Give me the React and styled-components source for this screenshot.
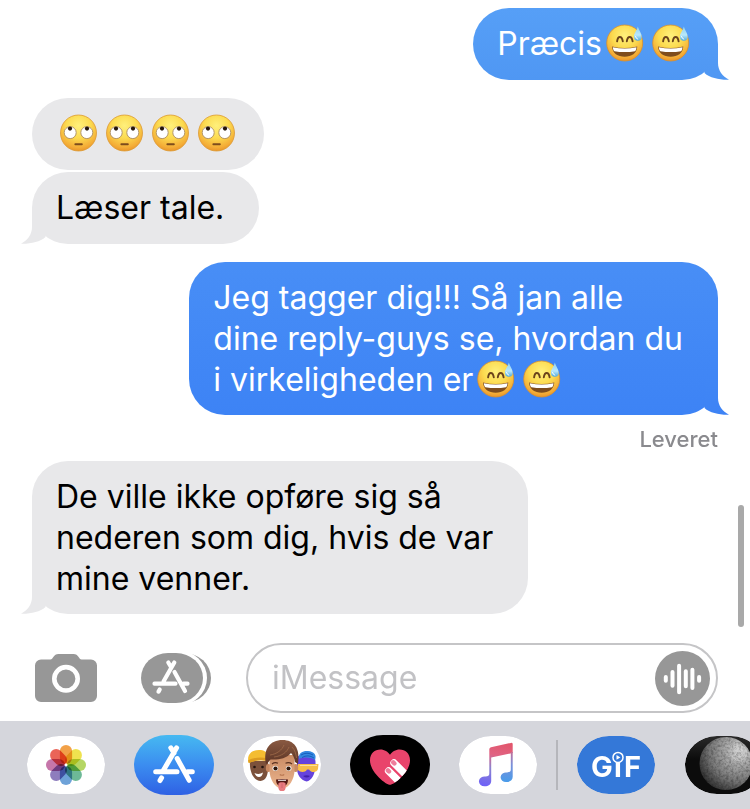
import React, { useState } from 'react';
import styled, { createGlobalStyle, css } from "styled-components"

const GlobalStyle = createGlobalStyle`
    * {
        box-sizing: border-box;
    }
    body {
        margin: 0;
        background-color: #fff;
        font-family: Inter, "Liberation Sans", sans-serif;
    }
    button {
        display: block;
        flex: none;
        padding: 0;
        border: 0;
        background: none;
        cursor: pointer;
    }
    svg {
        display: block;
    }
`

const Screen = styled.div`
    display: flex;
    flex-direction: column;
    min-height: 100vh;
    overflow-x: hidden;
`

const Thread = styled.main`
    position: relative;
    display: flex;
    flex-direction: column;
    flex: 1;
    gap: 18px;
    padding: 8px 32px 19px;
`

const ScrollThumb = styled.div`
    position: absolute;
    right: 6px;
    bottom: 6px;
    width: 6px;
    height: 122px;
    border-radius: 3px;
    background-color: #a9a9a9;
`

const Group = styled.div`
    display: flex;
    flex-direction: column;
    gap: 2px;
    align-items: ${({ $mine }) => ($mine ? 'flex-end' : 'flex-start')};
`

const BubbleWrapper = styled.div`
    position: relative;
    min-height: 72px;
    padding: 15px 24px;
    border-radius: 36px;
    font-size: 32px;
    line-height: 41px;
    white-space: pre-line;
    color: #000;
    background-color: #e8e8ea;
    ${({ $mine }) => $mine && css`
        color: #fff;
        background: linear-gradient(${({ $from }) => $from}, ${({ $to }) => $to});
    `}
    ${({ $wide }) => $wide && css`
        padding-right: 35px;
    `}
`

const TailSvg = styled.svg`
    position: absolute;
    bottom: 0;
    fill: ${({ $fill }) => $fill};
    ${({ $mine }) => ($mine ? css`right: -11px;` : css`
        left: -11px;
        transform: scaleX(-1);
    `)}
`

const EmojiSvg = styled.svg`
    display: inline-block;
    vertical-align: -7px;
`

const Status = styled.div`
    height: 28px;
    margin: -8px 0 -10px;
    font-size: 22px;
    font-weight: 500;
    line-height: 28px;
    text-align: right;
    color: #8a8a8e;
`

const Toolbar = styled.form`
    display: flex;
    align-items: center;
    padding: 10px 32px 8px 35px;
`

const ToolButton = styled.button`
    margin-right: ${({ $gap }) => $gap}px;
`

const Field = styled.div`
    display: flex;
    flex: 1;
    align-items: center;
    min-width: 0;
    height: 70px;
    padding: 0 6px 0 24px;
    border: 2px solid #c5c5c7;
    border-radius: 35px;
    input {
        flex: 1;
        min-width: 0;
        padding: 0;
        border: 0;
        outline: 0;
        font: inherit;
        font-size: 32px;
        line-height: 40px;
        background: none;
        &::placeholder {
            color: #c2c2c5;
            opacity: 1;
        }
    }
`

const Tray = styled.nav`
    display: flex;
    align-items: flex-start;
    gap: 28px;
    height: 88px;
    padding: 14px 0 0 26px;
    overflow: hidden;
    background-color: #d5d6dc;
`

const AppButton = styled.button`
    width: 80px;
    height: 60px;
    border-radius: 33px / 30px;
    overflow: hidden;
    background: ${({ $bg }) => $bg};
    ${({ $inset }) => $inset && css`
        border: 1px solid #d5d6dc;
        background-clip: padding-box;
        svg {
            margin: -1px;
        }
    `}
`

const Divider = styled.div`
    flex: none;
    width: 2px;
    height: 50px;
    margin: 5px -10px;
    background-color: #b5b6bb;
`

const Defs = styled.svg`
    position: absolute;
    width: 0;
    height: 0;
`

const SharedDefs = () => (
    <Defs aria-hidden="true">
        <defs>
            <linearGradient id="tailLight" x1="0" y1="0" x2="0" y2="1">
                <stop offset="0" stopColor="#539bf5" />
                <stop offset="1" stopColor="#4f97f3" />
            </linearGradient>
            <linearGradient id="tailDeep" x1="0" y1="0" x2="0" y2="1">
                <stop offset="0" stopColor="#4086f5" />
                <stop offset="1" stopColor="#3d83f5" />
            </linearGradient>
            <radialGradient id="face" cx=".5" cy=".3" r=".75">
                <stop offset="0" stopColor="#fff07c" />
                <stop offset=".45" stopColor="#fcdb50" />
                <stop offset=".8" stopColor="#f4ad37" />
                <stop offset="1" stopColor="#e58a25" />
            </radialGradient>
            <linearGradient id="drop" x1="0" y1="0" x2="0" y2="1">
                <stop offset="0" stopColor="#8fd0f0" />
                <stop offset=".6" stopColor="#b9e8fb" />
                <stop offset="1" stopColor="#4fa9dd" />
            </linearGradient>
            <linearGradient id="skin" x1="0" y1="0" x2="0" y2="1">
                <stop offset="0" stopColor="#c98b64" />
                <stop offset="1" stopColor="#ecb58e" />
            </linearGradient>
            <linearGradient id="hair" x1="0" y1="0" x2="0" y2="1">
                <stop offset="0" stopColor="#8a5a42" />
                <stop offset="1" stopColor="#5b3425" />
            </linearGradient>
            <linearGradient id="note" gradientUnits="userSpaceOnUse" x1="45" y1="8" x2="36" y2="52">
                <stop offset="0" stopColor="#e2566c" />
                <stop offset=".3" stopColor="#e06383" />
                <stop offset=".6" stopColor="#8b83cf" />
                <stop offset="1" stopColor="#6f62f6" />
            </linearGradient>
            <linearGradient id="noteRight" gradientUnits="userSpaceOnUse" x1="0" y1="12" x2="0" y2="46">
                <stop offset="0" stopColor="#e0607c" />
                <stop offset=".5" stopColor="#7d8fd8" />
                <stop offset="1" stopColor="#4b9be9" />
            </linearGradient>
            <radialGradient id="moon" cx=".76" cy=".26" r=".9">
                <stop offset="0" stopColor="#d6d6d6" />
                <stop offset=".3" stopColor="#a8a8a8" />
                <stop offset=".65" stopColor="#747474" />
                <stop offset="1" stopColor="#262626" />
            </radialGradient>
            <filter id="dust" x="0" y="0" width="1" height="1">
                <feTurbulence type="fractalNoise" baseFrequency=".4" numOctaves="3" seed="4" />
                <feColorMatrix values="0 0 0 0 0  0 0 0 0 0  0 0 0 0 0  2.2 0 0 0 -.85" />
                <feComposite in2="SourceGraphic" operator="in" />
            </filter>
        </defs>
    </Defs>
)

//Emojis
const SweatSmile = () => (
    <EmojiSvg width="46" height="38" viewBox="0 0 46 38" role="img" aria-label="😅">
        <circle cx="22.7" cy="19" r="18" fill="url(#face)" stroke="#d98f2c" strokeWidth=".8" />
        <path d="M15.1 17.4C15.8 11.6 19.9 11.6 20.8 17.4M24.8 17.4C25.6 11.6 29.8 11.6 30.6 17.4" fill="none" stroke="#6b431b" strokeWidth="1.9" strokeLinecap="round" />
        <path d="M10 22.6Q22.7 25.6 35.3 22.6C34.8 29.7 29.7 32.8 22.7 32.8S10.5 29.7 10 22.6Z" fill="#7f4d1d" />
        <path d="M10.8 23.2Q22.7 26 34.5 23.2C34.3 25.3 33.8 26.6 33 27.2Q22.7 29 12.4 27.2C11.6 26.6 11 25.3 10.8 23.2Z" fill="#fff" />
        <path d="M35.8 2.6C37.2 6.8 39.7 9.4 39.7 12.7A3.9 4 0 0 1 31.9 12.7C31.9 9.6 34.8 7 35.8 2.6Z" fill="url(#drop)" />
        <path d="M33.5 12.5Q34 14.8 35.8 15.2" fill="none" stroke="#fff" strokeWidth="1" strokeLinecap="round" />
    </EmojiSvg>
)

const EyeRoll = () => (
    <EmojiSvg width="46" height="38" viewBox="0 0 46 38" role="img" aria-label="🙄">
        <circle cx="22.5" cy="19" r="18" fill="url(#face)" stroke="#dc9a33" strokeWidth=".8" />
        <g fill="#fff" stroke="#a98b63" strokeWidth=".9">
            <circle cx="14.2" cy="18.6" r="6" />
            <circle cx="30.8" cy="18.6" r="6" />
        </g>
        <g fill="#241409">
            <circle cx="14" cy="14.6" r="2.1" />
            <circle cx="31" cy="14.6" r="2.1" />
            <rect x="18.4" y="29.3" width="8.4" height="1.9" rx=".9" fill="#7d4c1c" />
        </g>
    </EmojiSvg>
)

const Tail = (props) => (
    <TailSvg $mine={props.mine} $fill={props.fill} width="36" height="36" viewBox="0 0 36 36" aria-hidden="true">
        <path d="M25 0V19C25 26.5 29.5 32.5 36 35.7C26.5 36 17 34 11.5 29V0Z" />
    </TailSvg>
)

const Bubble = ({ mine, from, to, wide, tail, children }) => (
    <BubbleWrapper $mine={mine} $from={from} $to={to} $wide={wide}>
        {children}
        {tail && <Tail mine={mine} fill={tail} />}
    </BubbleWrapper>
)

//Toolbar icons
const CameraIcon = () => (
    <svg width="62" height="48" viewBox="0 0 62 48">
        <path d="M6 5.5H15.5C18 5.5 18.5 0 23.5 0H38.5C43.5 0 44 5.5 46.5 5.5H56A6 6 0 0 1 62 11.5V42A6 6 0 0 1 56 48H6A6 6 0 0 1 0 42V11.5A6 6 0 0 1 6 5.5Z" fill="#979797" />
        <circle cx="31" cy="24.8" r="11.7" fill="none" stroke="#fff" strokeWidth="4.6" />
    </svg>
)

const StoreIcon = () => (
    <svg width="70" height="50" viewBox="0 0 70 50">
        <rect x="8" width="62" height="50" rx="27" ry="25" fill="#979797" />
        <rect x="-1" y="-3" width="67" height="56" rx="30" ry="28" fill="#fff" />
        <rect width="62" height="50" rx="27" ry="25" fill="#979797" />
        <path d="M13.5 30.7H34.5M42.5 30.7H46.5M18.7 36.5L17.5 38.6M33.3 9.5L22.5 28.5M27.3 9.5L30 14M33.5 19L44 38" fill="none" stroke="#fff" strokeWidth="4.2" strokeLinecap="round" />
    </svg>
)

const WaveIcon = () => (
    <svg width="55" height="55" viewBox="0 0 55 55">
        <circle cx="27.5" cy="27.5" r="27.5" fill="#979797" />
        <path d="M10.8 26V29.7M17.5 21V34.7M24.1 14.7V41.3M30.8 20.3V35.3M37.4 18.7V37M44.1 26V29.7" stroke="#fff" strokeWidth="4" strokeLinecap="round" />
    </svg>
)

//Tray icons
const petals = ['#f0922a', '#ecdd32', '#a9cf4a', '#55ad86', '#5693d2', '#7c68b2', '#bd5f9c', '#e64a3c']

const Petal = styled.rect`
    fill-opacity: .86;
    mix-blend-mode: multiply;
`

const PhotosArt = () => (
    <svg width="80" height="60" viewBox="0 0 80 60">
        {petals.map((color, i) => (
            <Petal
                key={color}
                x="33.9"
                y="10"
                width="12.2"
                height="19"
                rx="6.1"
                fill={color}
                transform={`rotate(${i * 45} 40 30)`}
            />
        ))}
        <circle cx="40" cy="30" r="1.4" fill="#fff" />
    </svg>
)

const StoreArt = () => (
    <svg width="80" height="60" viewBox="0 0 80 60">
        <path d="M21.7 36.8H43M53.5 36.8H58.3M27.6 42.8L26 45.6M42.6 12.8L29 36M36.8 12.8L40 18M43.2 23.5L55.2 45.3" fill="none" stroke="#fff" strokeWidth="5" strokeLinecap="round" />
    </svg>
)

const MemojiArt = () => (
    <svg width="80" height="60" viewBox="0 0 80 60">
        <path d="M8 26C7 37 12 46 18.5 46S27 37 26 26Z" fill="#7c513b" />
        <path d="M6.5 28C4.5 19 10 15 17 15C22 15 25 17 26 20L26 26C19 24.5 12 25.5 6.5 28Z" fill="#f4bd31" />
        <path d="M7 28C12 25.3 19 24.6 25 26V23C18 21.8 11 22.5 6 25.5Z" fill="#dd9c20" />
        <circle cx="12.5" cy="32" r="1.3" fill="#231510" />
        <circle cx="20.5" cy="32" r="1.3" fill="#231510" />
        <path d="M12.5 38Q17 40 21 37.5Q20 42 17 42T12.5 38Z" fill="#fff" />
        <path d="M55 23C57 17 74 17 73.5 27C74 38 70 46 64.5 46.5C58 45 54 38 55 30Z" fill="#6543dc" />
        <path d="M57 24C56 17 62 15.5 66 16C72 16.5 75 20 73 25C68 22 62 22 57 24Z" fill="#3488e0" />
        <path d="M59 20Q65 16.5 71 20M60 22.5Q66 19 72 23" fill="none" stroke="#175ebc" strokeWidth="1" />
        <path d="M56 29H76.5L76 34C75 38 69 38 67 34.5H65C63 38 58 37.5 56 35Z" fill="#f6bd49" />
        <path d="M58 30.5H75" stroke="#fde099" strokeWidth="1" />
        <path d="M61 41Q65 39.5 68 41Q65 44 61 41Z" fill="#4120ac" />
        <ellipse cx="26.4" cy="33" rx="2.6" ry="4" fill="#c88961" />
        <ellipse cx="53.6" cy="33" rx="2.6" ry="4" fill="#c88961" />
        <path d="M27.5 20H52.5V35C52.5 44 47 53.5 40 53.5S27.5 44 27.5 35Z" fill="url(#skin)" />
        <path d="M24 29C21 14 28 5 40.5 5C52 5 58.5 13 56 29L53 27C52.5 23 51 20 49 18C44 24 36 25 28.5 24.5C27 26 26.5 27.5 24 29Z" fill="url(#hair)" />
        <path d="M28 20C35 19 40 15 42 10M32 22C40 21 45 17 47 12M50 12C53 15 54 19 54.5 23" fill="none" stroke="#a8724f" strokeWidth=".7" />
        <path d="M30 29Q33 26.8 36 28.3M43.5 28.3Q47 26.8 50 29" fill="none" stroke="#5c3322" strokeWidth="1.2" />
        <ellipse cx="33.3" cy="33.5" rx="2.8" ry="2.4" fill="#fff" />
        <ellipse cx="46.7" cy="33.5" rx="2.8" ry="2.4" fill="#fff" />
        <circle cx="33.5" cy="33.5" r="2.1" fill="#2d170d" />
        <circle cx="46.5" cy="33.5" r="2.1" fill="#2d170d" />
        <path d="M37.8 39.5Q40 41 42.2 39.5" fill="none" stroke="#b87650" strokeWidth="1.2" />
        <path d="M34 44.5Q40 43.5 46 44.5C46 49 43.5 51.5 40 51.5S34 49 34 44.5Z" fill="#551916" />
        <path d="M36 44.7H44V45.8H36Z" fill="#fff" />
        <path d="M36.4 48.4C37.5 46.8 42.5 46.8 43.6 48.4V52.4A3.6 3.6 0 0 1 36.4 52.4Z" fill="#e87b80" />
        <path d="M40 48.5V53" stroke="#c75a64" strokeWidth=".7" />
    </svg>
)

const TouchArt = () => (
    <svg width="80" height="60" viewBox="0 0 80 60">
        <clipPath id="heart">
            <path d="M40 49.8C36 49.8 20 37.5 20 25.2C20 18.5 24.8 14.5 30.4 14.5C34.5 14.5 38 16.8 40 19.8C42 16.8 45.5 14.5 49.6 14.5C55.2 14.5 60 18.5 60 25.2C60 37.5 44 49.8 40 49.8Z" />
        </clipPath>
        <g clipPath="url(#heart)">
            <rect width="80" height="60" fill="#e9446b" />
            <path d="M44 28L62 46M38.6 36L56 53.4" stroke="#fff" strokeWidth="7.4" strokeLinecap="round" />
            <path d="M43.3 27.4L44.4 28.5M37.9 35.4L39 36.5" stroke="#ee7e9b" strokeWidth="4.4" strokeLinecap="round" />
        </g>
    </svg>
)

const MusicArt = () => (
    <svg width="80" height="60" viewBox="0 0 80 60">
        <path d="M31.3 14.3Q31.3 12.6 33 12.2L53 7.9Q54.7 7.6 54.7 9.2V18L33.2 22.4V46C33.2 49.4 30.2 51.3 26.9 51.3A5.6 4.9 0 1 1 27.6 41.6C30 41.3 31.3 41 31.3 38.5Z" fill="url(#note)" />
        <path d="M52.8 17V34.5C52.8 36.8 51.6 37 49 37.5A5.4 4.8 0 1 0 48.4 47C51.8 47 54.7 45 54.7 41.7V17Z" fill="url(#noteRight)" />
    </svg>
)

const GifArt = () => (
    <svg width="80" height="60" viewBox="0 0 80 60">
        <g fill="#fff" fontFamily="Inter, 'Liberation Sans', sans-serif" fontSize="29" fontWeight="700">
            <text x="15" y="42">G</text>
            <text x="38" y="42">ı</text>
            <text x="48" y="42">F</text>
        </g>
        <circle cx="42" cy="22.4" r="5" fill="#3478d8" stroke="#fff" strokeWidth="1.5" />
        <path d="M40.5 20V24.8L44.4 22.4Z" fill="#fff" />
    </svg>
)

const MoonArt = () => (
    <svg width="80" height="60" viewBox="0 0 80 60">
        <circle cx="42" cy="28.5" r="26.5" fill="url(#moon)" />
        <circle cx="42" cy="28.5" r="26.5" fill="#000" filter="url(#dust)" opacity=".28" />
        <g fill="none" stroke="#e0e0e0" strokeOpacity=".4">
            <circle cx="55" cy="18" r="4" />
            <circle cx="55" cy="18" r="7.5" />
        </g>
    </svg>
)

const apps = [
    { name: 'Fotos', Art: PhotosArt, bg: '#fff', inset: true },
    { name: 'App Store', Art: StoreArt, bg: 'linear-gradient(#46b9f1, #3b8df0 50%, #2f61e4)' },
    { name: 'Memoji', Art: MemojiArt, bg: '#fff', inset: true },
    { name: 'Digital Touch', Art: TouchArt, bg: '#000' },
    { name: 'Musik', Art: MusicArt, bg: '#fff', inset: true },
]

const recentApps = [
    { name: 'GIF', Art: GifArt, bg: '#3478d8', inset: true },
    { name: 'Måne', Art: MoonArt, bg: 'linear-gradient(#2a2a2a, #0c0c0c 40%)', inset: true },
]

const AppIcon = ({ name, Art, bg, inset }) => (
    <AppButton type="button" aria-label={name} $bg={bg} $inset={inset}>
        <Art />
    </AppButton>
)

const App = () => {
    const [message, setMessage] = useState('')
    return (
        <Screen>
            <GlobalStyle />
            <SharedDefs />
            <Thread>
                <Group $mine>
                    <Bubble mine tail="url(#tailLight)" from="#569ff7" to="#4f97f3">
                        Præcis<SweatSmile /><SweatSmile />
                    </Bubble>
                </Group>
                <Group>
                    <Bubble>
                        <EyeRoll /><EyeRoll /><EyeRoll /><EyeRoll />
                    </Bubble>
                    <Bubble tail="#e8e8ea" wide>Læser tale.</Bubble>
                </Group>
                <Group $mine>
                    <Bubble mine tail="url(#tailDeep)" wide from="#488ef6" to="#3d83f5">
                        {'Jeg tagger dig!!! Så jan alle\ndine reply-guys se, hvordan du\ni virkeligheden er'}
                        <SweatSmile /><SweatSmile />
                    </Bubble>
                </Group>
                <Status>Leveret</Status>
                <Group>
                    <Bubble tail="#e8e8ea" wide>
                        {'De ville ikke opføre sig så\nnederen som dig, hvis de var\nmine venner.'}
                    </Bubble>
                </Group>
                <ScrollThumb />
            </Thread>
            <Toolbar onSubmit={(e) => e.preventDefault()}>
                <ToolButton type="button" aria-label="Kamera" $gap={44}>
                    <CameraIcon />
                </ToolButton>
                <ToolButton type="button" aria-label="Apps" $gap={35}>
                    <StoreIcon />
                </ToolButton>
                <Field>
                    <input
                        type="text"
                        aria-label="iMessage"
                        placeholder="iMessage"
                        value={message}
                        onChange={(e) => setMessage(e.target.value)}
                    />
                    <button type="button" aria-label="Optag lyd">
                        <WaveIcon />
                    </button>
                </Field>
            </Toolbar>
            <Tray>
                {apps.map((app) => <AppIcon key={app.name} {...app} />)}
                <Divider />
                {recentApps.map((app) => <AppIcon key={app.name} {...app} />)}
            </Tray>
        </Screen>
    )
};

export default App;
